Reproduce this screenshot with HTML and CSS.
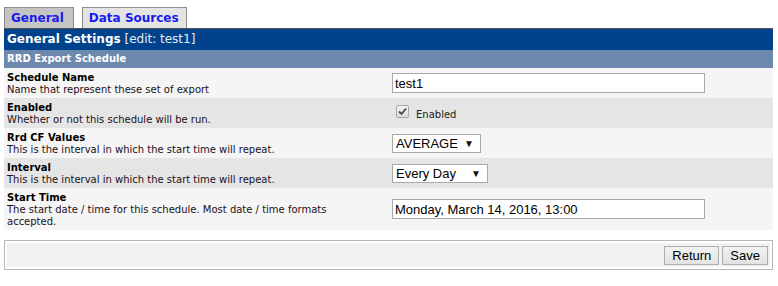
FILE: index.html
```html
<!DOCTYPE html>
<html>
<head>
<meta charset="utf-8">
<link rel="stylesheet" href="styles.css">
</head>
<body>
<div class="page">
  <div class="tabs">
    <span class="tab tab-active">General</span>
    <span class="tab">Data Sources</span>
  </div>
  <div class="panel">
    <div class="head"><b>General Settings</b> <span class="head-edit">[edit: test1]</span></div>
    <div class="subhead">RRD Export Schedule</div>
    <div class="row odd">
      <div class="label"><div class="title">Schedule Name</div><div class="desc">Name that represent these set of export</div></div>
      <div class="value"><input class="text" type="text" value="test1"></div>
    </div>
    <div class="row even">
      <div class="label"><div class="title">Enabled</div><div class="desc">Whether or not this schedule will be run.</div></div>
      <div class="value"><span class="check"><span class="box"><svg width="9" height="9" viewBox="0 0 9 9"><path d="M1 4.5 L3.5 7 L8 1.5" fill="none" stroke="#4a4a4a" stroke-width="1.8"/></svg></span><span class="check-label">Enabled</span></span></div>
    </div>
    <div class="row odd">
      <div class="label"><div class="title">Rrd CF Values</div><div class="desc">This is the interval in which the start time will repeat.</div></div>
      <div class="value"><span class="select sel-avg">AVERAGE<span class="arrow">&#9660;</span></span></div>
    </div>
    <div class="row even">
      <div class="label"><div class="title">Interval</div><div class="desc">This is the interval in which the start time will repeat.</div></div>
      <div class="value"><span class="select sel-int">Every Day<span class="arrow">&#9660;</span></span></div>
    </div>
    <div class="row odd tall">
      <div class="label"><div class="title">Start Time</div><div class="desc">The start date / time for this schedule. Most date / time formats accepted.</div></div>
      <div class="value"><input class="text" type="text" value="Monday, March 14, 2016, 13:00"></div>
    </div>
  </div>
  <div class="actions">
    <div class="actions-inner">
      <button class="btn">Return</button>
      <button class="btn">Save</button>
    </div>
  </div>
</div>
</body>
</html>
```
FILE: styles.css
```css
html, body {
  margin: 0;
  padding: 0;
  background: #ffffff;
}
body {
  font-family: "DejaVu Sans", Verdana, sans-serif;
}
.page {
  margin: 7px 5px 0 4px;
}
.tabs {
  display: flex;
  gap: 8px;
  height: 21px;
}
.tab {
  box-sizing: border-box;
  height: 21px;
  padding: 2px 7px 0 6px;
  border: 1px solid #8c8c8c;
  border-bottom: none;
  background: #e4e4e4;
  color: #1a1aee;
  font-weight: bold;
  font-size: 12px;
  line-height: 17px;
}
.tab-active {
  background: #c4c4c4;
  padding-right: 9px;
}
.panel {
  display: flex;
  flex-direction: column;
}
.head {
  box-sizing: border-box;
  height: 22px;
  background: #00438c;
  border-top: 1px solid #555;
  color: #ffffff;
  font-size: 12px;
  line-height: 20px;
  padding-left: 3px;
}
.head-edit {
  color: #e6ecf5;
  font-weight: normal;
}
.subhead {
  height: 18px;
  background: #6d88ad;
  color: #ffffff;
  font-weight: bold;
  font-size: 10px;
  line-height: 18px;
  padding-left: 3px;
}
.row {
  display: flex;
  align-items: center;
  height: 30px;
}
.row.tall {
  height: 42px;
}
.odd { background: #f5f5f5; }
.even { background: #e5e5e5; }
.label {
  width: 384px;
  padding-left: 3px;
  box-sizing: border-box;
}
.title {
  font-weight: bold;
  font-size: 10px;
  line-height: 13px;
  color: #000;
}
.desc {
  font-size: 10px;
  line-height: 12px;
  color: #1c1020;
  max-width: 340px;
}
.value {
  flex: 1;
  padding-left: 4px;
  display: flex;
  align-items: center;
}
.text {
  box-sizing: border-box;
  width: 313px;
  height: 20px;
  margin: 0;
  border: 1px solid #a9a9a9;
  padding: 0 2px;
  font-family: "Liberation Sans", Arial, sans-serif;
  font-size: 13px;
  color: #000;
  background: #fff;
}
.check {
  display: flex;
  align-items: center;
  gap: 7px;
  padding-left: 4px;
}
.box {
  box-sizing: border-box;
  width: 13px;
  height: 13px;
  border: 1px solid #a8a8a8;
  border-radius: 2px;
  background: linear-gradient(#f4f4f4, #dcdcdc);
  display: flex;
  align-items: center;
  justify-content: center;
  margin-top: -3px;
}
.check-label {
  font-size: 10px;
  color: #222;
  margin-top: 3px;
}
.select {
  box-sizing: border-box;
  display: inline-flex;
  align-items: center;
  justify-content: space-between;
  height: 19px;
  border: 1px solid #a9a9a9;
  background: #fff;
  padding: 0 6px 0 3px;
  font-family: "Liberation Sans", Arial, sans-serif;
  font-size: 13px;
  color: #000;
}
.sel-avg { width: 89px; }
.sel-int { width: 96px; }
.arrow {
  font-size: 10px;
  color: #111;
}
.actions {
  box-sizing: border-box;
  margin-top: 10px;
  height: 30px;
  border: 1px solid #b8b8b8;
  padding: 2px;
}
.actions-inner {
  height: 100%;
  background: #f2f2f2;
  display: flex;
  justify-content: flex-end;
  align-items: center;
  gap: 3px;
  padding-right: 2px;
}
.btn {
  box-sizing: border-box;
  height: 19px;
  margin: 0;
  padding: 0 7px;
  border: 1px solid #acacac;
  border-radius: 0;
  background: linear-gradient(#f2f2f2, #e2e2e2);
  font-family: "Liberation Sans", Arial, sans-serif;
  font-size: 13px;
  color: #000;
}
```
